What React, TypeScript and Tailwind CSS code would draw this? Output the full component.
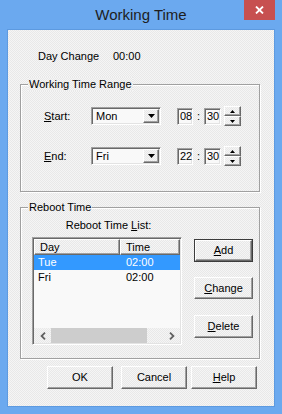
import React from "react";

const dither =
  "bg-[#efefef] bg-[image:repeating-conic-gradient(#f5f5f5_0_25%,#e8e8e8_0_50%)] bg-[length:2px_2px]";
const raised =
  "border border-t-white border-l-white border-r-[#696969] border-b-[#696969] shadow-[inset_-1px_-1px_0_#a0a0a0]";
const sunken =
  "border border-t-[#a0a0a0] border-l-[#a0a0a0] border-r-white border-b-white shadow-[inset_1px_1px_0_#696969,inset_-1px_-1px_0_#e3e3e3]";
const etched = "border border-[#a0a0a0] shadow-[1px_1px_0_#fff,inset_1px_1px_0_#fff]";

function Combo({ value }: { value: string }) {
  return (
    <div className={`w-[70px] h-[18px] ${sunken} bg-[#f9f9f9] flex items-center p-[1px]`}>
      <span className="flex-1 pl-[3px] leading-none">{value}</span>
      <div className={`w-[16px] h-full ${raised} ${dither} flex items-center justify-center`}>
        <svg width="7" height="4" viewBox="0 0 7 4">
          <path d="M0 0H7L3.5 4Z" fill="#000" />
        </svg>
      </div>
    </div>
  );
}

function TimeBox({ value, w }: { value: string; w: string }) {
  return (
    <div className={`${w} h-[17px] ${sunken} bg-[#f9f9f9] flex items-center pl-[2px] overflow-hidden whitespace-nowrap leading-none`}>
      {value}
    </div>
  );
}

function Spinner() {
  return (
    <div className="w-[17px] h-[20px] flex flex-col">
      <div className={`flex-1 ${raised} ${dither} flex items-center justify-center`}>
        <svg width="5" height="3" viewBox="0 0 5 3">
          <path d="M2.5 0L5 3H0Z" fill="#000" />
        </svg>
      </div>
      <div className={`flex-1 ${raised} ${dither} flex items-center justify-center`}>
        <svg width="5" height="3" viewBox="0 0 5 3">
          <path d="M0 0H5L2.5 3Z" fill="#000" />
        </svg>
      </div>
    </div>
  );
}

function TimeRow({ label, day, hh, mm }: { label: React.ReactNode; day: string; hh: string; mm: string }) {
  return (
    <div className="h-[20px] flex items-center pl-[23px]">
      <span className="w-[47px]">{label}</span>
      <Combo value={day} />
      <div className="ml-[16px]">
        <TimeBox value={hh} w="w-[16px]" />
      </div>
      <span className="w-[11px] text-center">:</span>
      <TimeBox value={mm} w="w-[17px]" />
      <div className="ml-[3px]">
        <Spinner />
      </div>
    </div>
  );
}

function Btn({ children, w, h, isDefault }: { children: React.ReactNode; w: string; h: string; isDefault?: boolean }) {
  if (isDefault) {
    return (
      <div className={`${w} ${h} border border-[#3c3c3c] flex`}>
        <div className={`flex-1 ${raised} ${dither} flex items-center justify-center`}>{children}</div>
      </div>
    );
  }
  return <div className={`${w} ${h} ${raised} ${dither} flex items-center justify-center`}>{children}</div>;
}

export default function App() {
  return (
    <div className="w-[282px] h-[414px] bg-[#6ba9ef] flex flex-col font-['Liberation_Sans',Arial,sans-serif] text-[11px] text-black">
      <div className="h-[29px] relative flex items-center justify-center">
        <span className="text-[15px] text-[#1e1e1e] leading-none -mt-[1px]">Working Time</span>
        <div className="absolute top-0 right-[7px] w-[31px] h-[20px] bg-[#c75050] flex items-center justify-center">
          <svg width="9" height="8" viewBox="0 0 9 8">
            <path d="M1 0.5L8 7.5M8 0.5L1 7.5" stroke="#fff" strokeWidth="1.8" />
          </svg>
        </div>
      </div>
      <div className={`ml-[7px] w-[268px] h-[378px] border border-[#5d9ae0] ${dither} flex flex-col`}>
        <div className="mt-[19px] h-[14px] flex items-center pl-[30px]">
          <span className="w-[75px]">Day Change</span>
          <span>00:00</span>
        </div>

        <div className={`relative mt-[21px] ml-[12px] w-[240px] h-[108px] ${etched} pt-[21px]`}>
          <span className={`absolute -top-[8px] left-[7px] px-[1px] h-[14px] leading-[14px] ${dither}`}>
            Working Time Range
          </span>
          <TimeRow label={<><u>S</u>tart:</>} day="Mon" hh="08" mm="30" />
          <div className="mt-[20px]">
            <TimeRow label={<><u>E</u>nd:</>} day="Fri" hh="22" mm="30" />
          </div>
        </div>

        <div className={`relative mt-[15px] ml-[12px] w-[240px] h-[152px] ${etched} pt-[10px] flex`}>
          <span className={`absolute -top-[8px] left-[7px] px-[1px] h-[14px] leading-[14px] ${dither}`}>
            Reboot Time
          </span>
          <div className="ml-[11px] w-[150px] flex flex-col">
            <div className="h-[14px] leading-[14px] text-center pl-[3px]">
              Reboot Time <u>L</u>ist:
            </div>
            <div className={`mt-[5px] w-[150px] h-[108px] ${sunken} bg-[#f9f9f9] p-[1px] flex flex-col`}>
              <div className="h-[16px] flex shrink-0">
                <div className={`w-[86px] ${raised} ${dither} pl-[5px] flex items-center`}>Day</div>
                <div className={`flex-1 ${raised} ${dither} pl-[5px] flex items-center`}>Time</div>
              </div>
              <div className="flex-1">
                <div className="h-[15px] flex items-center bg-[#3399ff] text-white">
                  <span className="w-[86px] pl-[4px]">Tue</span>
                  <span className="pl-[6px]">02:00</span>
                </div>
                <div className="h-[15px] flex items-center">
                  <span className="w-[86px] pl-[4px]">Fri</span>
                  <span className="pl-[6px]">02:00</span>
                </div>
              </div>
              <div className={`h-[15px] flex shrink-0 ${dither}`}>
                <div className="w-[17px] flex items-center justify-center">
                  <svg width="6" height="8" viewBox="0 0 6 8">
                    <path d="M5 0.7L1.6 4L5 7.3" stroke="#606060" strokeWidth="1.8" fill="none" />
                  </svg>
                </div>
                <div className="w-[96px] bg-[#cdcdcd]" />
                <div className="flex-1" />
                <div className="w-[17px] flex items-center justify-center">
                  <svg width="6" height="8" viewBox="0 0 6 8">
                    <path d="M1 0.7L4.4 4L1 7.3" stroke="#606060" strokeWidth="1.8" fill="none" />
                  </svg>
                </div>
              </div>
            </div>
          </div>
          <div className="ml-[12px] pt-[21px] flex flex-col">
            <Btn w="w-[59px]" h="h-[23px]" isDefault>
              <span><u>A</u>dd</span>
            </Btn>
            <div className="mt-[15px]">
              <Btn w="w-[59px]" h="h-[22px]">
                <span><u>C</u>hange</span>
              </Btn>
            </div>
            <div className="mt-[16px]">
              <Btn w="w-[59px]" h="h-[23px]">
                <span><u>D</u>elete</span>
              </Btn>
            </div>
          </div>
        </div>

        <div className="mt-[7px] flex">
          <div className="ml-[39px]">
            <Btn w="w-[66px]" h="h-[23px]">OK</Btn>
          </div>
          <div className="ml-[8px]">
            <Btn w="w-[66px]" h="h-[23px]">Cancel</Btn>
          </div>
          <div className="ml-[4px]">
            <Btn w="w-[66px]" h="h-[23px]">
              <span><u>H</u>elp</span>
            </Btn>
          </div>
        </div>
      </div>
    </div>
  );
}
